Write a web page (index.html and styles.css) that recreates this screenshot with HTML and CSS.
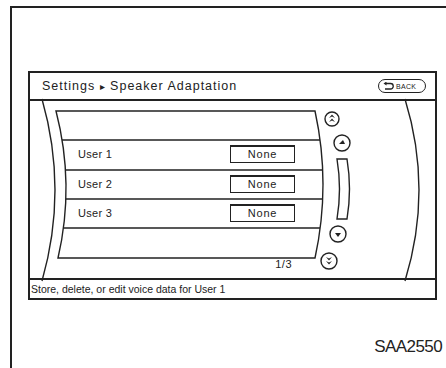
FILE: index.html
```html
<!DOCTYPE html>
<html lang="en">
<head>
  <meta charset="UTF-8" />
  <meta name="viewport" content="width=device-width, initial-scale=1.0"/>
  <title>Settings - Speaker Adaptation</title>
  <link rel="stylesheet" href="styles.css">
</head>
<body>
  <div class="frame">
    <div class="screen">
      <div class="title">
        <span class="crumb">Settings <span class="arrow">&#9656;</span> Speaker Adaptation</span>
        <span class="back">
          <svg width="11" height="8" viewBox="0 0 11 8">
            <path d="M3 1.5 H7.5 A2.7 2.7 0 0 1 7.5 7 H2" fill="none" stroke="#222" stroke-width="1.3"/>
            <path d="M0.5 1.5 L3.5 -0.5 L3.5 3.5 Z" fill="#222"/>
          </svg>
          BACK
        </span>
      </div>

      <div class="content">
        <svg class="drum" width="405" height="178" viewBox="0 0 405 178">
          <g fill="none" stroke="#222" stroke-width="1.4">
            <path d="M12 -2 Q38 89 12 180"/>
            <path d="M375 -2 Q403 89 375 180"/>
            <path d="M26 10 L285 10 Q301 83.5 285 157 L28 157 Q45 83.5 26 10 Z"/>
            <path d="M32 39 H290 M35.5 69 H292.7 M35.9 98 H292.7 M33.3 127 H290"/>
            <circle cx="302" cy="18" r="7"/>
            <circle cx="312" cy="42" r="8"/>
            <path d="M307 58 H317 Q322 88 317 118 H307 Q312 88 307 58 Z"/>
            <circle cx="308" cy="133" r="8"/>
            <circle cx="299" cy="160" r="8"/>
          </g>
          <g fill="#222">
            <path d="M299 17 L302 13.5 L305 17 L302 15.5 Z"/>
            <path d="M299 21 L302 17.5 L305 21 L302 19.5 Z"/>
            <path d="M309 43 L313 39 L315 43 Z"/>
            <path d="M305 132 L311 132 L308 136 Z"/>
            <path d="M296 156 L299 159.5 L302 156 L299 157.5 Z"/>
            <path d="M296 160 L299 163.5 L302 160 L299 161.5 Z"/>
          </g>
        </svg>

        <div class="list">
          <div class="row">
            <span class="user">User 1</span>
            <span class="box">None</span>
          </div>
          <div class="row">
            <span class="user">User 2</span>
            <span class="box">None</span>
          </div>
          <div class="row">
            <span class="user">User 3</span>
            <span class="box">None</span>
          </div>
        </div>
        <div class="pager">1/3</div>
      </div>

      <div class="footer">Store, delete, or edit voice data for User 1</div>
    </div>

    <div class="code">SAA2550</div>
  </div>
</body>
</html>
```

FILE: styles.css
```css
body {
  margin: 0;
  width: 446px;
  height: 368px;
  overflow: hidden;
  background: #fff;
  color: #222;
  font-family: "Liberation Sans", Arial, sans-serif;
}
.frame {
  margin: 6px 0 0 10px;
  border-left: 2px solid #222;
  border-top: 2px solid #222;
  height: 362px;
  padding: 63px 0 0 16px;
  box-sizing: border-box;
}
.screen {
  width: 409px;
  height: 229px;
  border: 2px solid #222;
  box-sizing: border-box;
  display: flex;
  flex-direction: column;
}
.title {
  height: 25px;
  border-bottom: 2px solid #222;
  display: flex;
  align-items: center;
  justify-content: space-between;
  padding: 1px 9px 0 12px;
}
.crumb {
  font-size: 12.5px;
  letter-spacing: 1px;
}
.arrow {
  font-size: 10px;
}
.back {
  display: flex;
  align-items: center;
  gap: 2px;
  height: 14px;
  width: 48px;
  box-sizing: border-box;
  border: 1.5px solid #222;
  border-radius: 8px;
  padding-left: 4px;
  font-size: 7px;
  letter-spacing: 0.3px;
}
.content {
  position: relative;
  height: 178px;
  padding: 39px 0 0 33px;
  box-sizing: border-box;
}
.drum {
  position: absolute;
  left: 0;
  top: 0;
  overflow: visible;
}
.list {
  position: relative;
  width: 258px;
}
.row {
  height: 29.3px;
  display: flex;
  align-items: center;
  justify-content: space-between;
  padding: 0 26px 0 15px;
}
.user {
  font-size: 11px;
  letter-spacing: 0.3px;
}
.box {
  width: 65px;
  height: 18px;
  box-sizing: border-box;
  border: 1.5px solid #222;
  border-top-width: 2px;
  font-size: 11px;
  letter-spacing: 0.8px;
  text-align: center;
  line-height: 15px;
}
.pager {
  position: relative;
  width: 258px;
  margin-top: 30px;
  padding-right: 29px;
  box-sizing: border-box;
  text-align: right;
  font-size: 11px;
  letter-spacing: 0.5px;
}
.footer {
  height: 18px;
  border-top: 2px solid #222;
  padding-left: 1px;
  font-size: 10.5px;
  line-height: 18px;
}
.code {
  width: 414px;
  margin-top: 37px;
  text-align: right;
  font-size: 17px;
  letter-spacing: -0.6px;
}
```
